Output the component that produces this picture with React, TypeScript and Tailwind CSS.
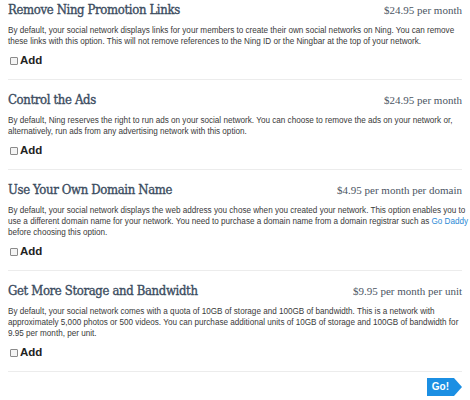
import React from 'react';

// 한 항목(섹션) 데이터
interface Option {
  title: string;
  price: string;
  lines: React.ReactNode[];
}

const options: Option[] = [
  {
    title: 'Remove Ning Promotion Links',
    price: '$24.95 per month',
    lines: [
      'By default, your social network displays links for your members to create their own social networks on Ning. You can remove',
      'these links with this option. This will not remove references to the Ning ID or the Ningbar at the top of your network.',
    ],
  },
  {
    title: 'Control the Ads',
    price: '$24.95 per month',
    lines: [
      'By default, Ning reserves the right to run ads on your social network. You can choose to remove the ads on your network or,',
      'alternatively, run ads from any advertising network with this option.',
    ],
  },
  {
    title: 'Use Your Own Domain Name',
    price: '$4.95 per month per domain',
    lines: [
      'By default, your social network displays the web address you chose when you created your network. This option enables you to',
      <>
        use a different domain name for your network. You need to purchase a domain name from a domain registrar such as{' '}
        <span className="text-[#2b8ad6]">Go Daddy</span>
      </>,
      'before choosing this option.',
    ],
  },
  {
    title: 'Get More Storage and Bandwidth',
    price: '$9.95 per month per unit',
    lines: [
      'By default, your social network comes with a quota of 10GB of storage and 100GB of bandwidth. This is a network with',
      'approximately 5,000 photos or 500 videos. You can purchase additional units of 10GB of storage and 100GB of bandwidth for',
      '9.95 per month, per unit.',
    ],
  },
];

const OptionBlock: React.FC<{ option: Option; first: boolean }> = ({ option, first }) => (
  <div className={`${first ? 'pt-0' : 'pt-[10px]'} pb-[11px] border-b border-[#ececec]`}>
    {/* 제목 + 가격 */}
    <div className="flex justify-between items-baseline h-[20px]">
      <h2 className="font-['DejaVu_Serif',serif] font-stretch-condensed text-[13px] leading-[20px] text-[#3b4c60] tracking-[-0.35px] [-webkit-text-stroke:0.35px_#3b4c60]">
        {option.title}
      </h2>
      <span className="font-['Liberation_Serif',serif] text-[11px] text-[#4b5563]">{option.price}</span>
    </div>
    {/* 설명 */}
    <p className="mt-[5px] font-['Liberation_Sans',sans-serif] text-[8.15px] leading-[11px] text-[#3a3a3a] whitespace-nowrap">
      {option.lines.map((l, i) => (
        <span key={i} className="block">
          {l}
        </span>
      ))}
    </p>
    {/* 체크박스 */}
    <label className="mt-[7px] flex items-center h-[14px] pl-[2px] gap-[2px]">
      <span className="w-[8px] h-[8px] border border-[#8a8a8a] rounded-[1px] bg-[#f4f4f4]" />
      <span className="font-['Liberation_Sans',sans-serif] font-bold text-[11.5px] text-[#222]">Add</span>
    </label>
  </div>
);

export default function App() {
  return (
    <div className="w-[470px] h-[400px] bg-white px-2 overflow-hidden">
      {options.map((o, i) => (
        <OptionBlock key={o.title} option={o} first={i === 0} />
      ))}
      <div className="flex justify-end mt-[6px] pr-0">
        <div className="flex items-center">
          <span className="h-[18px] px-[5px] bg-[#1b8fe3] text-white font-['Liberation_Sans',sans-serif] font-bold text-[10px] leading-[18px]">
            Go!
          </span>
          <span className="w-0 h-0 border-y-[9px] border-y-transparent border-l-[8px] border-l-[#1b8fe3]" />
        </div>
      </div>
    </div>
  );
}
